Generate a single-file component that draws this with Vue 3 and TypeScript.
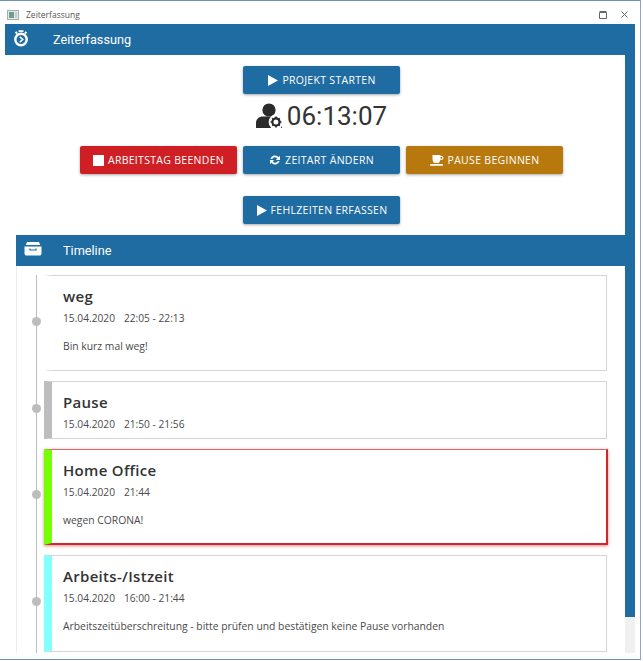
<script setup lang="ts">
interface Entry {
  title: string
  date: string
  time: string
  note?: string
  bar: string
  height: number
  alert?: boolean
}

const entries: Entry[] = [
  { title: 'weg', date: '15.04.2020', time: '22:05 - 22:13', note: 'Bin kurz mal weg!', bar: 'transparent', height: 96 },
  { title: 'Pause', date: '15.04.2020', time: '21:50 - 21:56', bar: '#bdbdbd', height: 58 },
  { title: 'Home Office', date: '15.04.2020', time: '21:44', note: 'wegen CORONA!', bar: '#76ff03', height: 96, alert: true },
  { title: 'Arbeits-/Istzeit', date: '15.04.2020', time: '16:00 - 21:44', note: 'Arbeitszeitüberschreitung - bitte prüfen und bestätigen keine Pause vorhanden', bar: '#84ffff', height: 97 }
]
</script>

<template>
  <div class="window">
    <div class="titlebar">
      <svg class="app-icon" width="12" height="10" viewBox="0 0 12 10">
        <rect x="0.5" y="0.5" width="11" height="9" fill="#e4e9e9" stroke="#a3aeae" />
        <rect x="2" y="2" width="5" height="6" fill="#6f9f8c" />
        <rect x="8" y="2" width="2" height="6" fill="#c5cdcd" />
      </svg>
      <span class="title-text">Zeiterfassung</span>
      <span class="controls">
        <svg width="8" height="8" viewBox="0 0 8 8"><path d="M.5 1.500h7v6h-7zM.5 .5h7" fill="none" stroke="#666" /></svg>
        <svg width="7" height="7" viewBox="0 0 7 7"><path d="M.5 .5l6 6M6.500 .5l-6 6" fill="none" stroke="#666" /></svg>
      </span>
    </div>

    <div class="app">
      <header class="app-header">
        <svg class="watch" width="16" height="18" viewBox="0 0 16 18">
          <circle cx="8" cy="10.500" r="5.700" fill="none" stroke="#fff" stroke-width="2.400" />
          <path d="M5.500 1.200h5v1.800h-5zM1.800 3.600l1.600-1.300 1.500 1.600-1.600 1.300zM14.200 3.600l-1.600-1.300-1.500 1.600 1.600 1.300z" fill="#fff" />
          <path d="M6.800 7.800l3 2.700-3 2.700" fill="none" stroke="#fff" stroke-width="1.600" />
        </svg>
        <span>Zeiterfassung</span>
      </header>

      <div class="columns">
        <main class="main">
          <section class="actions">
            <button class="btn blue">
              <svg width="11" height="11" viewBox="0 0 11 11"><path d="M1 0l10 5.500-10 5.500z" fill="#fff" /></svg>
              PROJEKT STARTEN
            </button>
            <div class="clock">
              <svg width="28" height="26" viewBox="0 0 28 26">
                <circle cx="13" cy="7" r="6.600" fill="#2b2b2b" />
                <path d="M0 25v-5c0-4 3-6.500 7-6.500h12c4 0 7 2.500 7 6.500v5z" fill="#2b2b2b" />
                <circle cx="20" cy="19" r="7.400" fill="#fff" />
                <circle cx="20" cy="19" r="3.600" fill="none" stroke="#2b2b2b" stroke-width="2.200" />
                <path d="M20 13.600v2M20 22.400v2M14.600 19h2M23.400 19h2M16.200 15.200l1.400 1.400M22.400 21.400l1.400 1.400M23.800 15.200l-1.400 1.400M17.600 21.400l-1.400 1.400" stroke="#2b2b2b" stroke-width="1.600" />
              </svg>
              <span>06:13:07</span>
            </div>
            <div class="btn-row">
              <button class="btn red">
                <span class="stop"></span>
                ARBEITSTAG BEENDEN
              </button>
              <button class="btn blue">
                <svg width="12" height="12" viewBox="0 0 12 12">
                  <path d="M1.400 5A4.700 4.700 0 0 1 9.600 3.200L11 1.800v4.100H6.900l1.400-1.400A2.900 2.900 0 0 0 3.200 5zM10.600 7A4.700 4.700 0 0 1 2.400 8.800L1 10.200V6.100h4.100L3.700 7.500A2.900 2.900 0 0 0 8.800 7z" fill="#fff" />
                </svg>
                ZEITART ÄNDERN
              </button>
              <button class="btn amber">
                <svg width="14" height="11" viewBox="0 0 14 11">
                  <path d="M2.500 0h8v1h1.500a1.400 1.400 0 0 1 1.300 1.400v.8A1.500 1.500 0 0 1 11.800 4.700h-1.500C10 6.500 9.300 8 8 8H5C3.500 8 2.500 6 2.500 4zM10.500 2v1.800h1.200a.6.6 0 0 0 .6-.6v-.7a.5.5 0 0 0-.5-.5z" fill="#fff" />
                  <rect x="0" y="9" width="13" height="1.800" rx=".9" fill="#fff" />
                </svg>
                PAUSE BEGINNEN
              </button>
            </div>
            <button class="btn blue absence">
              <svg width="11" height="11" viewBox="0 0 11 11"><path d="M1 0l10 5.500-10 5.500z" fill="#fff" /></svg>
              FEHLZEITEN ERFASSEN
            </button>
          </section>

          <section class="panel">
            <header class="panel-header">
              <svg width="18" height="14" viewBox="0 0 18 14">
                <path d="M3 0h12l1.200 3H1.800z" fill="#fff" />
                <path d="M0.500 4.500h17v7a2 2 0 0 1-2 2h-13a2 2 0 0 1-2-2z" fill="#fff" />
                <path d="M6 6.500v1.500h6V6.500" fill="none" stroke="#1f6ca3" stroke-width="1.200" />
              </svg>
              <span>Timeline</span>
            </header>
            <div class="timeline">
              <article
                v-for="entry in entries"
                :key="entry.title"
                class="card"
                :class="{ alert: entry.alert }"
                :style="{ height: entry.height + 'px', borderLeftColor: entry.bar }"
              >
                <i class="dot"></i>
                <h3>{{ entry.title }}</h3>
                <p class="when"><span>{{ entry.date }}</span><span>{{ entry.time }}</span></p>
                <p v-if="entry.note" class="note">{{ entry.note }}</p>
              </article>
            </div>
          </section>
        </main>
        <div class="scrollbar"><div class="thumb"></div></div>
      </div>
    </div>
  </div>
</template>

<style scoped>
.window {
  width: 641px;
  height: 660px;
  box-sizing: border-box;
  border-top: 1px solid #6f93bd;
  border-right: 1px solid #8aa7c9;
  border-bottom: 1px solid #6f93bd;
  background: #fff;
  display: flex;
  flex-direction: column;
  overflow: hidden;
  font-family: "Open Sans", sans-serif;
  color: #333;
}
.titlebar {
  height: 23px;
  flex: none;
  display: flex;
  align-items: center;
  padding: 4px 12px 0 7px;
  box-sizing: border-box;
}
.app-icon { margin-right: 7px; }
.title-text { font-size: 8.500px; color: #555; }
.controls {
  margin-left: auto;
  display: flex;
  align-items: center;
  gap: 14px;
}
.app {
  margin: 0 5px;
  height: 629px;
  display: flex;
  flex-direction: column;
}
.app-header {
  height: 31px;
  flex: none;
  background: #1f6ca3;
  color: #fff;
  display: flex;
  align-items: center;
  font: 12.700px Roboto, sans-serif;
}
.watch { margin: 0 0 3px 8px; }
.app-header span { margin-left: 24px; }
.columns {
  flex: 1;
  display: flex;
  min-height: 0;
}
.main {
  flex: 1;
  min-width: 0;
  display: flex;
  flex-direction: column;
}
.scrollbar {
  width: 10px;
  flex: none;
  background: #f0f0f0;
}
.thumb {
  height: 562px;
  background: #1f6ca3;
}
.actions {
  height: 180px;
  flex: none;
  box-sizing: border-box;
  padding: 11px 0 0 13px;
  display: flex;
  flex-direction: column;
  align-items: center;
}
.btn {
  width: 157px;
  height: 28px;
  border: 0;
  border-radius: 2px;
  padding: 0;
  color: #fff;
  font: 500 10.500px "Open Sans", sans-serif;
  letter-spacing: 0.3px;
  display: inline-flex;
  align-items: center;
  justify-content: center;
  gap: 4px;
  box-shadow: 0 1px 3px rgba(0, 0, 0, 0.35);
}
.blue { background: #1f6ca3; }
.red { background: #cf1f25; }
.amber { background: #b7790e; }
.stop {
  width: 11px;
  height: 11px;
  background: #fff;
}
.clock {
  height: 36px;
  margin-top: 4px;
  display: flex;
  align-items: center;
  gap: 3px;
  font: 26px Roboto, sans-serif;
  color: #333;
}
.btn-row {
  margin-top: 12px;
  display: flex;
  gap: 6px;
}
.absence { margin-top: 22px; }
.panel {
  flex: 1;
  min-height: 0;
  margin-left: 11px;
  border-left: 1px solid #ececec;
  display: flex;
  flex-direction: column;
}
.panel-header {
  height: 31px;
  flex: none;
  margin-left: -1px;
  background: #1f6ca3;
  color: #fff;
  display: flex;
  align-items: center;
  font: 12.700px Roboto, sans-serif;
}
.panel-header svg { margin: 0 0 4px 8px; }
.panel-header span { margin-left: 21px; }
.timeline {
  margin: 9px 18px 0 19px;
  padding-left: 7px;
  border-left: 1px solid #bdbdbd;
  flex: 1;
  display: flex;
  flex-direction: column;
  gap: 10px;
}
.card {
  position: relative;
  flex: none;
  box-sizing: border-box;
  border: 1px solid #d4d4d4;
  border-left: 8px solid transparent;
  padding: 10px 0 0 11px;
}
.card.alert {
  border-top-color: #e2666a;
  border-right: 2px solid #d3262b;
  border-bottom: 2px solid #d3262b;
  box-shadow: 0 1px 3px rgba(170, 30, 30, 0.5);
  width: calc(100% + 1px);
}
.dot {
  position: absolute;
  left: -12.500px;
  top: calc(50% - 2px);
  width: 9px;
  height: 9px;
  margin-top: -4.500px;
  margin-left: -8px;
  border-radius: 50%;
  background: #bdbdbd;
}
h3 {
  margin: 0;
  font-size: 15px;
  line-height: 21px;
  font-weight: 600;
  letter-spacing: 0.3px;
  color: #333;
}
.when {
  margin: 4px 0 0;
  font-size: 10.200px;
  line-height: 14px;
  color: #4a4a4a;
  display: flex;
  gap: 9px;
}
.note {
  margin: 14px 0 0;
  font-size: 10.350px;
  line-height: 14px;
  color: #4a4a4a;
}
</style>
